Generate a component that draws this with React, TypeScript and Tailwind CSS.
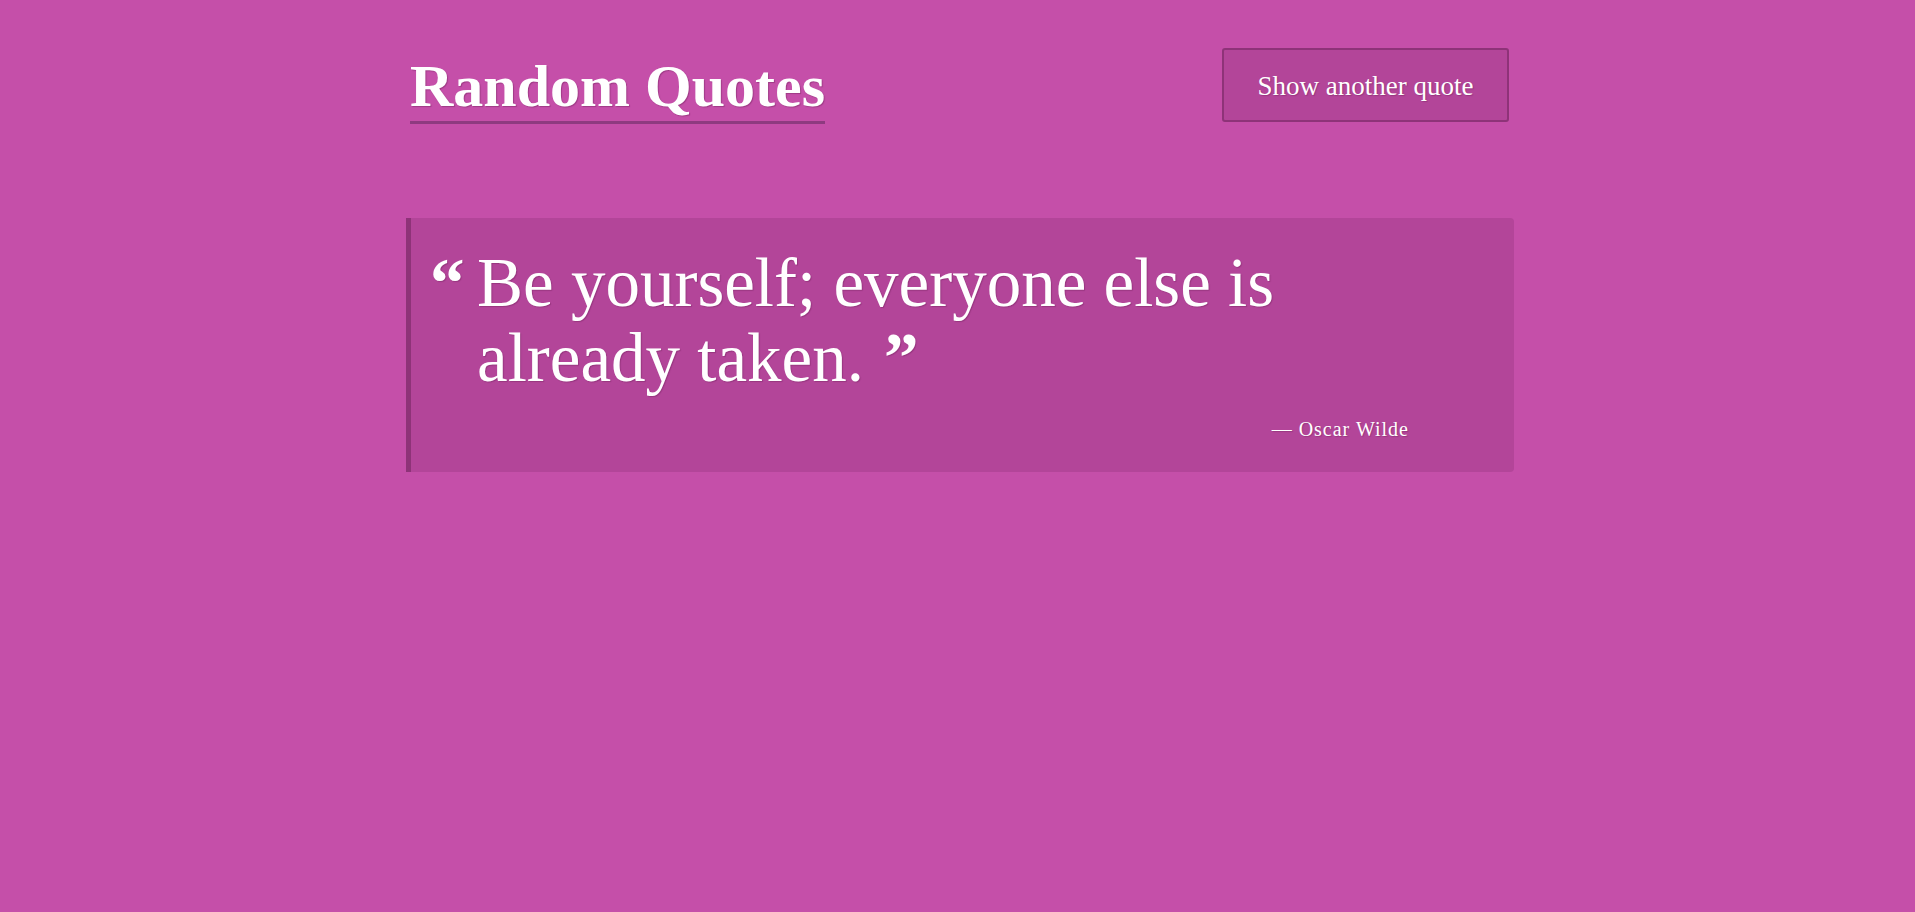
const quote = {
  text: "Be yourself; everyone else is already taken.",
  author: "Oscar Wilde",
};

export default function App() {
  return (
    <div className="min-h-[912px] bg-[#c54fa9] pl-[5px] font-['Liberation_Serif',serif] text-white">
      <div className="mx-auto w-[1108px]">
        <header className="flex items-start justify-between pt-[48px] pl-[4px] pr-[5px]">
          <h1 className="mt-[3px] border-b-[3px] border-[#8e3a80] text-[60px] font-bold leading-[70px] [text-shadow:1px_1px_1px_rgba(90,20,70,0.35)]">
            Random Quotes
          </h1>
          <button className="flex h-[74px] w-[287px] items-center justify-center rounded-[3px] border-2 border-[#8e3378] bg-[#b34599] pt-[2px] text-[27px] [text-shadow:1px_1px_1px_rgba(90,20,70,0.3)]">
            Show another quote
          </button>
        </header>

        <blockquote className="mt-[94px] flex rounded-r-[4px] border-l-[5px] border-[#8e3378] bg-[#b34599] pt-[28px] pb-[29px] pl-[19px] [text-shadow:1px_1px_1px_rgba(90,20,70,0.3)]">
          <span className="w-[47px] shrink-0 text-[69px] font-bold leading-[75px]">“</span>
          <div className="flex-1 pr-[105px]">
            <p className="text-[69px] leading-[75px]">
              {quote.text}
              <span className="ml-[20px] inline-block font-bold">”</span>
            </p>
            <p className="mt-[19px] text-right text-[20px] leading-[28px] tracking-[1px]">
              — {quote.author}
            </p>
          </div>
        </blockquote>
      </div>
    </div>
  );
}
